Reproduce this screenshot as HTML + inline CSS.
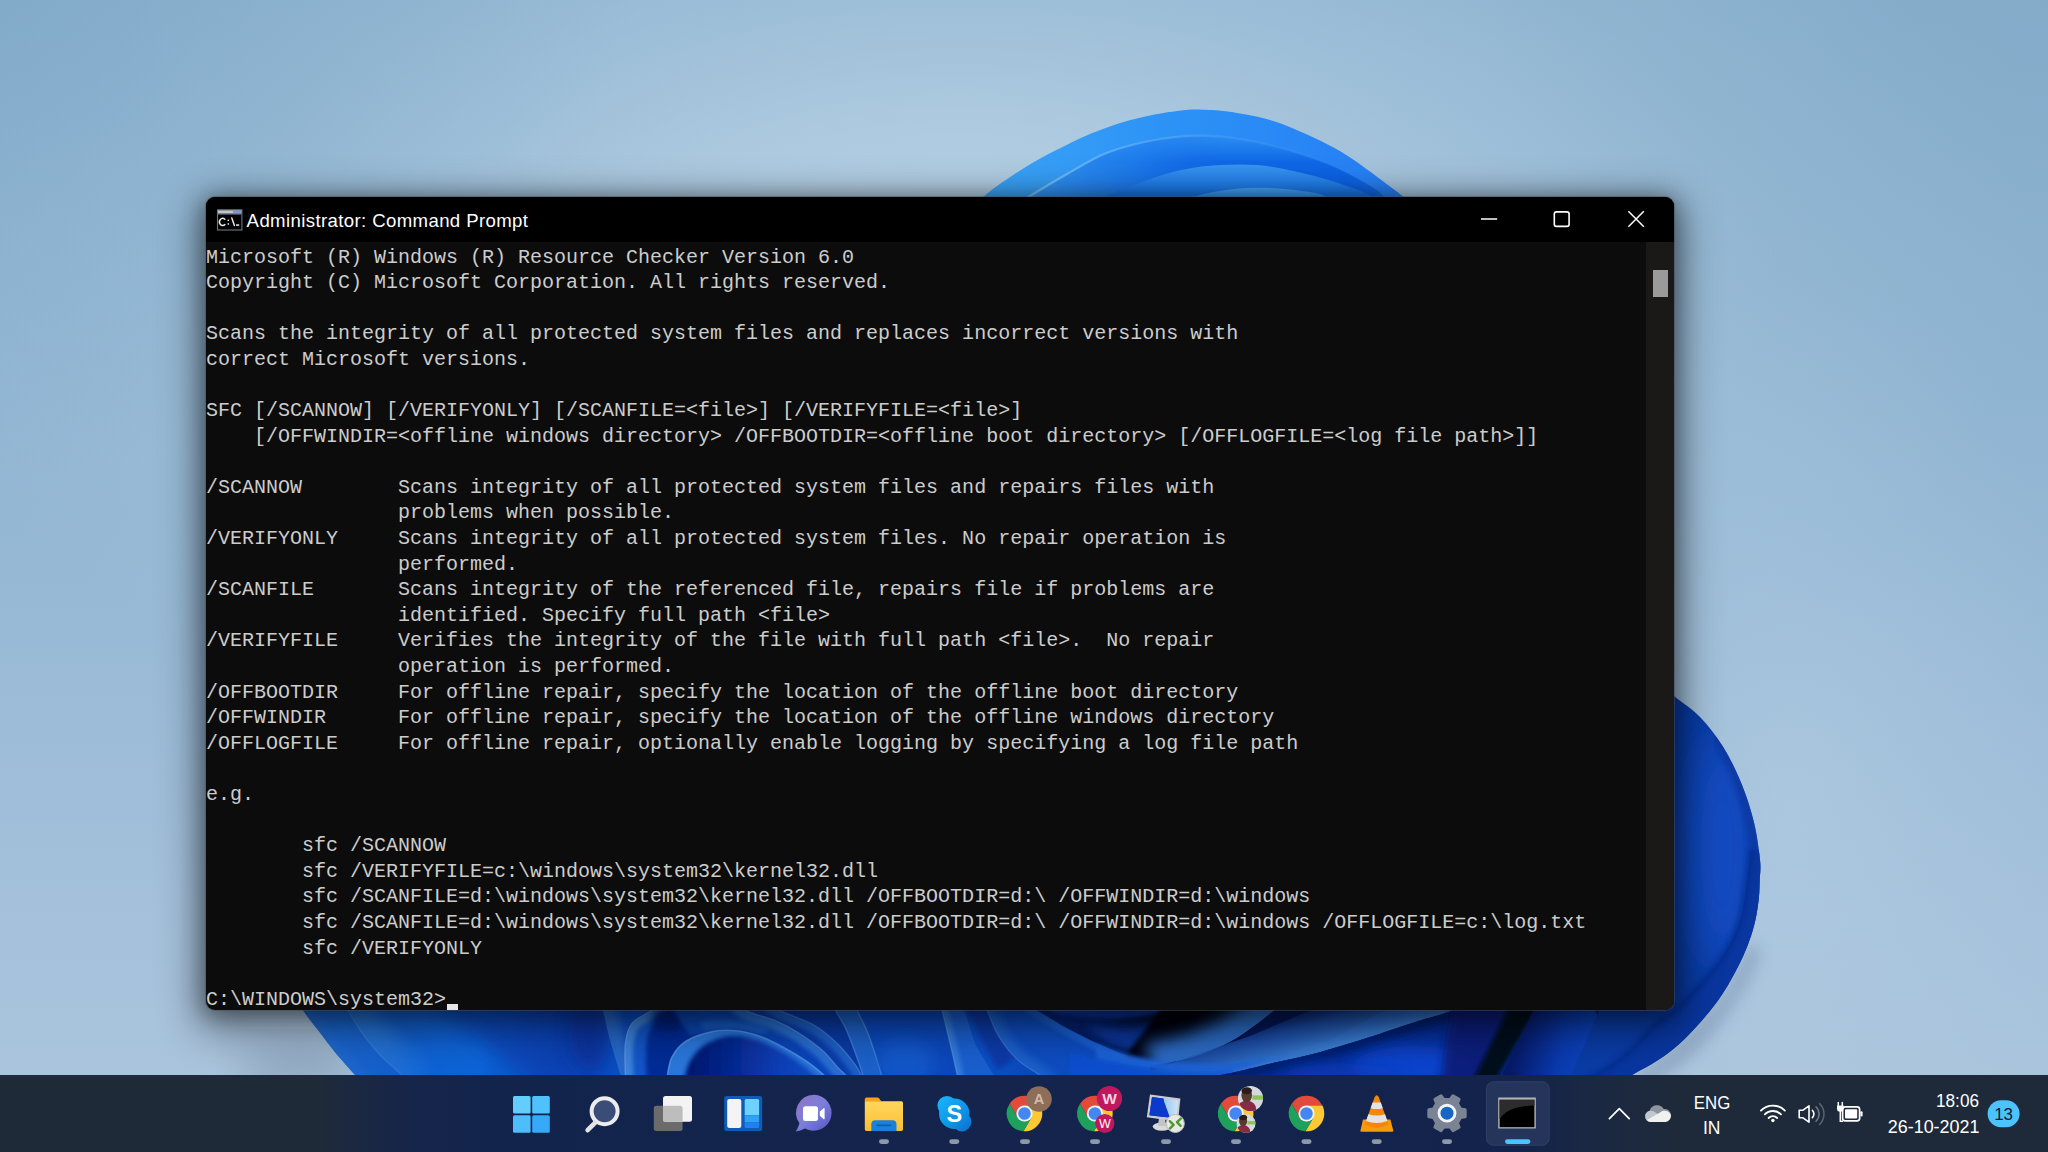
<!DOCTYPE html>
<html>
<head>
<meta charset="utf-8">
<title>Administrator: Command Prompt</title>
<style>
*{margin:0;padding:0;box-sizing:border-box}
html,body{width:2048px;height:1152px;overflow:hidden;background:#9dbbd6;font-family:"Liberation Sans",sans-serif}
#wall{position:absolute;left:0;top:0;width:2048px;height:1152px}
#win{position:absolute;left:206px;top:197px;width:1468px;height:813px;background:#0c0c0c;border-radius:9px;overflow:hidden;
 box-shadow:0 0 0 1px rgba(70,80,95,.5),0 12px 42px 8px rgba(0,0,0,.42),0 3px 22px 3px rgba(0,0,0,.34)}
#tb{position:absolute;left:0;top:0;width:100%;height:45px;background:#000}
#tb .ico{position:absolute;left:11px;top:12px;width:26px;height:21px}
#tb .ttl{position:absolute;left:40.6px;top:12px;font-size:18.6px;line-height:24px;color:#fff;white-space:pre;letter-spacing:0.38px}
#tb svg.ctl{position:absolute;top:0;left:0}
#con{position:absolute;left:0;top:45px;width:1440px;height:768px;overflow:hidden}
#con pre{position:absolute;left:0;top:2.5px;font-family:"Liberation Mono",monospace;font-size:20px;line-height:25.6px;color:#cccccc;white-space:pre}
#cur{position:absolute;left:240.5px;top:761.8px;width:11.5px;height:5.8px;background:#e6e6e6}
#sb{position:absolute;left:1440px;top:45px;width:28px;height:768px;background:#1a1918}
#sb i{position:absolute;left:7px;top:28px;width:15px;height:27px;background:#9a9a9a}
#task{position:absolute;left:0;top:1075px;width:2048px;height:77px;overflow:hidden}
</style>
</head>
<body>
<svg id="wall" width="2048" height="1152" viewBox="0 0 2048 1152">
<defs>
<linearGradient id="bg0" x1="0" y1="0" x2="0" y2="1"><stop offset="0" stop-color="#89b0cd"/><stop offset=".45" stop-color="#94b7d4"/><stop offset=".8" stop-color="#a5c1db"/><stop offset="1" stop-color="#acc5dd"/></linearGradient>
</defs>
<rect width="2048" height="1152" fill="url(#bg0)"/>
<defs>
<filter id="b2" x="-5%" y="-5%" width="110%" height="110%"><feGaussianBlur stdDeviation="2"/></filter>
<filter id="b4" x="-5%" y="-5%" width="110%" height="110%"><feGaussianBlur stdDeviation="4"/></filter>
<filter id="b8" x="-10%" y="-10%" width="120%" height="120%"><feGaussianBlur stdDeviation="8"/></filter>
<filter id="sb2" filterUnits="userSpaceOnUse" x="200" y="960" width="1700" height="160"><feGaussianBlur stdDeviation="2"/></filter>
<filter id="sb4" filterUnits="userSpaceOnUse" x="200" y="960" width="1700" height="160"><feGaussianBlur stdDeviation="4"/></filter>
<filter id="sb8" filterUnits="userSpaceOnUse" x="200" y="960" width="1700" height="160"><feGaussianBlur stdDeviation="8"/></filter>
<filter id="rb8" filterUnits="userSpaceOnUse" x="1500" y="600" width="400" height="552"><feGaussianBlur stdDeviation="8"/></filter>
<filter id="b20" x="-20%" y="-20%" width="140%" height="140%"><feGaussianBlur stdDeviation="20"/></filter>
<filter id="b60" x="-30%" y="-30%" width="160%" height="160%"><feGaussianBlur stdDeviation="60"/></filter>
<linearGradient id="ta1" x1="983" y1="0" x2="1403" y2="0" gradientUnits="userSpaceOnUse"><stop offset="0" stop-color="#3ba4f6"/><stop offset=".45" stop-color="#2c92f6"/><stop offset="1" stop-color="#267df5"/></linearGradient>
<linearGradient id="ta2" x1="0" y1="134" x2="0" y2="197" gradientUnits="userSpaceOnUse"><stop offset="0" stop-color="#2f8ff3"/><stop offset=".45" stop-color="#0e68e6"/><stop offset="1" stop-color="#0a5be0"/></linearGradient>
<linearGradient id="ta2h" x1="1020" y1="0" x2="1390" y2="0" gradientUnits="userSpaceOnUse"><stop offset="0" stop-color="#7cc6fa" stop-opacity=".95"/><stop offset=".55" stop-color="#4aa0f4" stop-opacity=".5"/><stop offset="1" stop-color="#2a8af2" stop-opacity="0"/></linearGradient>
<linearGradient id="ta2l" x1="1020" y1="0" x2="1400" y2="0" gradientUnits="userSpaceOnUse"><stop offset="0" stop-color="#3a9ef4" stop-opacity=".95"/><stop offset=".3" stop-color="#2a8af0" stop-opacity=".55"/><stop offset=".55" stop-color="#1a70e8" stop-opacity="0"/><stop offset=".85" stop-color="#1a70e8" stop-opacity="0"/><stop offset="1" stop-color="#2a80f0" stop-opacity=".5"/></linearGradient>
<linearGradient id="ta3" x1="0" y1="164" x2="0" y2="200" gradientUnits="userSpaceOnUse"><stop offset="0" stop-color="#3a96f0"/><stop offset="1" stop-color="#0f6ce6"/></linearGradient>
<linearGradient id="ta4" x1="0" y1="187" x2="0" y2="200" gradientUnits="userSpaceOnUse"><stop offset="0" stop-color="#49a4f4"/><stop offset="1" stop-color="#2b8cee"/></linearGradient>
<radialGradient id="rb1" cx="1728" cy="850" r="150" gradientUnits="userSpaceOnUse"><stop offset="0" stop-color="#1453cc"/><stop offset=".5" stop-color="#0d47bc"/><stop offset="1" stop-color="#0a3aa4"/></radialGradient>
<linearGradient id="bs0" x1="300" y1="0" x2="1760" y2="0" gradientUnits="userSpaceOnUse">
<stop offset="0" stop-color="#1b68cf"/><stop offset=".068" stop-color="#155fcc"/><stop offset=".123" stop-color="#0e62d6"/><stop offset=".178" stop-color="#0a48ba"/><stop offset=".219" stop-color="#0c4fc4"/><stop offset=".274" stop-color="#0a3fb0"/><stop offset=".397" stop-color="#0a48c0"/><stop offset=".479" stop-color="#0c4ec4"/><stop offset=".548" stop-color="#0a3aa0"/><stop offset=".65" stop-color="#0a3cb0"/><stop offset=".767" stop-color="#0b44cc"/><stop offset=".84" stop-color="#0a3cac"/><stop offset="1" stop-color="#0a38a4"/></linearGradient>
<clipPath id="cTop"><rect x="900" y="60" width="600" height="160"/></clipPath>
</defs>
<radialGradient id="bgc" cx="0" cy="0" r="1" gradientUnits="userSpaceOnUse" gradientTransform="translate(960 270) scale(1080 540)"><stop offset="0" stop-color="#bad3e6" stop-opacity=".9"/><stop offset=".25" stop-color="#bad3e6" stop-opacity=".74"/><stop offset=".5" stop-color="#b9d2e6" stop-opacity=".44"/><stop offset=".75" stop-color="#b8d1e6" stop-opacity=".16"/><stop offset="1" stop-color="#b8d1e6" stop-opacity="0"/></radialGradient>
<radialGradient id="bgr" cx="0" cy="0" r="1" gradientUnits="userSpaceOnUse" gradientTransform="translate(1790 800) scale(300 520)"><stop offset="0" stop-color="#b6cfe4" stop-opacity=".5"/><stop offset=".5" stop-color="#b6cfe4" stop-opacity=".22"/><stop offset="1" stop-color="#b6cfe4" stop-opacity="0"/></radialGradient>
<radialGradient id="bgtl" cx="0" cy="0" r="1" gradientUnits="userSpaceOnUse" gradientTransform="translate(-60 -40) scale(700 520)"><stop offset="0" stop-color="#7ca7c7" stop-opacity=".6"/><stop offset=".5" stop-color="#7ca7c7" stop-opacity=".25"/><stop offset="1" stop-color="#7ca7c7" stop-opacity="0"/></radialGradient>
<radialGradient id="bgtr" cx="0" cy="0" r="1" gradientUnits="userSpaceOnUse" gradientTransform="translate(2110 -40) scale(640 560)"><stop offset="0" stop-color="#7ea8c6" stop-opacity=".55"/><stop offset=".5" stop-color="#7ea8c6" stop-opacity=".22"/><stop offset="1" stop-color="#7ea8c6" stop-opacity="0"/></radialGradient>
<rect width="2048" height="1152" fill="url(#bgc)"/>
<rect width="2048" height="1152" fill="url(#bgr)"/>
<rect width="2048" height="1152" fill="url(#bgtl)"/>
<rect width="2048" height="1152" fill="url(#bgtr)"/>
<ellipse cx="300" cy="1066" rx="60" ry="26" fill="#5d6f86" opacity=".32" filter="url(#b20)"/>
<g clip-path="url(#cTop)">
<path d="M944.0 230.0C950.5 224.5 973.3 204.9 983.2 196.8C993.1 188.7 995.9 186.9 1003.5 181.6C1011.1 176.3 1020.4 170.1 1028.9 165.0C1037.4 159.9 1045.8 155.5 1054.3 151.1C1062.8 146.7 1071.2 142.2 1079.7 138.4C1088.2 134.6 1096.5 131.2 1105.0 128.2C1113.5 125.1 1121.9 122.4 1130.4 120.1C1138.9 117.8 1147.3 115.9 1155.8 114.3C1164.3 112.7 1174.8 111.3 1181.2 110.5C1187.6 109.7 1187.7 109.4 1194.0 109.4C1200.3 109.4 1210.8 109.7 1219.3 110.5C1227.8 111.3 1236.2 112.7 1244.7 114.3C1253.2 115.9 1261.6 117.6 1270.1 120.1C1278.6 122.6 1287.0 126.0 1295.5 129.5C1304.0 133.0 1312.4 136.8 1320.9 141.0C1329.4 145.2 1337.8 149.6 1346.3 154.9C1354.8 160.2 1364.1 167.2 1371.7 172.7C1379.3 178.2 1386.7 184.0 1392.0 188.0C1397.3 192.0 1395.4 190.1 1403.4 196.8C1411.4 203.5 1433.9 222.8 1440.0 228.0Z" fill="url(#ta1)"/>
<path d="M990.0 222.0C996.5 217.8 1016.1 204.8 1028.9 196.8C1041.7 188.8 1054.3 181.2 1067.0 174.0C1079.7 166.8 1092.3 158.9 1105.0 153.6C1117.7 148.3 1130.4 145.1 1143.1 142.2C1155.8 139.3 1168.5 137.4 1181.2 136.4C1193.9 135.4 1206.6 135.4 1219.3 136.4C1232.0 137.4 1244.7 139.5 1257.4 142.2C1270.1 144.9 1282.8 148.4 1295.5 152.4C1308.2 156.4 1320.9 160.6 1333.6 166.3C1346.3 172.0 1363.2 181.6 1371.7 186.7C1380.2 191.8 1378.0 190.9 1384.4 196.8C1390.8 202.7 1405.7 217.8 1410.0 222.0Z" fill="url(#ta2)"/>
<path d="M990.0 222.0C996.5 217.8 1016.1 204.8 1028.9 196.8C1041.7 188.8 1054.3 181.2 1067.0 174.0C1079.7 166.8 1092.3 158.9 1105.0 153.6C1117.7 148.3 1130.4 145.1 1143.1 142.2C1155.8 139.3 1168.5 137.4 1181.2 136.4C1193.9 135.4 1206.6 135.4 1219.3 136.4C1232.0 137.4 1244.7 139.5 1257.4 142.2C1270.1 144.9 1282.8 148.4 1295.5 152.4C1308.2 156.4 1320.9 160.6 1333.6 166.3C1346.3 172.0 1363.2 181.6 1371.7 186.7C1380.2 191.8 1378.0 190.9 1384.4 196.8C1390.8 202.7 1405.7 217.8 1410.0 222.0Z" fill="url(#ta2l)"/>
<path d="M990.0 222.0C996.5 217.8 1016.1 204.8 1028.9 196.8C1041.7 188.8 1054.3 181.2 1067.0 174.0C1079.7 166.8 1092.3 158.9 1105.0 153.6C1117.7 148.3 1130.4 145.1 1143.1 142.2C1155.8 139.3 1168.5 137.4 1181.2 136.4C1193.9 135.4 1206.6 135.4 1219.3 136.4C1232.0 137.4 1244.7 139.5 1257.4 142.2C1270.1 144.9 1282.8 148.4 1295.5 152.4C1308.2 156.4 1320.9 160.6 1333.6 166.3C1346.3 172.0 1363.2 181.6 1371.7 186.7C1380.2 191.8 1378.0 190.9 1384.4 196.8C1390.8 202.7 1405.7 217.8 1410.0 222.0" fill="none" stroke="url(#ta2h)" stroke-width="2.2"/>
<path d="M1060.0 222.0C1067.5 217.8 1091.2 203.5 1105.0 196.8C1118.8 190.1 1130.3 186.1 1143.0 181.6C1155.7 177.1 1168.5 172.8 1181.2 170.1C1193.9 167.3 1206.6 165.9 1219.3 165.1C1232.0 164.3 1244.7 164.0 1257.4 165.1C1270.1 166.2 1282.8 168.7 1295.5 171.4C1308.2 174.2 1320.9 177.4 1333.6 181.6C1346.3 185.8 1360.6 190.1 1371.7 196.8C1382.8 203.5 1395.3 217.8 1400.0 222.0Z" fill="url(#ta3)"/>
<path d="M1150.0 215.0C1157.3 212.0 1180.3 201.1 1194.0 196.8C1207.7 192.5 1219.3 190.7 1232.0 189.2C1244.7 187.7 1257.3 187.5 1270.0 187.9C1282.7 188.3 1298.7 190.2 1308.0 191.7C1317.3 193.2 1319.0 192.9 1326.0 196.8C1333.0 200.7 1346.0 212.0 1350.0 215.0Z" fill="url(#ta4)"/>
</g>
<clipPath id="cBot"><path d="M296.0 996.0C297.2 998.5 299.6 1005.1 303.4 1011.0C307.2 1016.9 313.8 1024.8 319.0 1031.6C324.2 1038.4 328.7 1044.7 334.7 1051.9C340.7 1059.1 351.1 1070.7 355.0 1075.0C358.9 1079.3 357.5 1077.5 358.0 1078.0L1628 1078L1640 996Z"/></clipPath>
<g clip-path="url(#cBot)">
<rect x="280" y="1000" width="1500" height="90" fill="url(#bs0)"/>
<clipPath id="se1"><path d="M296.0 996.0C297.2 998.5 299.6 1005.1 303.4 1011.0C307.2 1016.9 313.8 1024.8 319.0 1031.6C324.2 1038.4 328.7 1044.7 334.7 1051.9C340.7 1059.1 350.4 1069.7 355.0 1075.0C359.6 1080.3 360.8 1082.5 362.0 1084.0L420.0 1084.0L420.0 996.0Z"/></clipPath>
<g clip-path="url(#se1)"><path d="M296.0 996.0C297.2 998.5 299.6 1005.1 303.4 1011.0C307.2 1016.9 313.8 1024.8 319.0 1031.6C324.2 1038.4 328.7 1044.7 334.7 1051.9C340.7 1059.1 350.4 1069.7 355.0 1075.0C359.6 1080.3 360.8 1082.5 362.0 1084.0" fill="none" stroke="#2a6cc8" stroke-width="20" opacity="0.35" filter="url(#sb4)"/></g>
<clipPath id="se2"><path d="M338.0 996.0C339.8 998.7 344.4 1005.3 348.8 1012.0C353.2 1018.7 358.9 1028.9 364.4 1036.3C369.9 1043.7 375.4 1050.1 381.6 1056.6C387.9 1063.0 397.2 1070.4 401.9 1075.0C406.6 1079.6 408.6 1082.5 410.0 1084.0L560.0 1084.0L560.0 996.0Z"/></clipPath>
<g clip-path="url(#se2)"><path d="M338.0 996.0C339.8 998.7 344.4 1005.3 348.8 1012.0C353.2 1018.7 358.9 1028.9 364.4 1036.3C369.9 1043.7 375.4 1050.1 381.6 1056.6C387.9 1063.0 397.2 1070.4 401.9 1075.0C406.6 1079.6 408.6 1082.5 410.0 1084.0" fill="none" stroke="#2c78d6" stroke-width="48" opacity="0.7" filter="url(#sb8)"/></g>
<path d="M338.0 996.0C339.8 998.7 344.4 1005.3 348.8 1012.0C353.2 1018.7 358.9 1028.9 364.4 1036.3C369.9 1043.7 375.4 1050.1 381.6 1056.6C387.9 1063.0 397.2 1070.4 401.9 1075.0C406.6 1079.6 408.6 1082.5 410.0 1084.0" fill="none" stroke="#4a8fe0" stroke-width="1.6" opacity="0.4"/>
<ellipse cx="440" cy="1062" rx="50" ry="20" fill="#0868dc" opacity=".45" filter="url(#sb8)"/>
<path d="M436 1004L600 1004L600 1084L536 1084Z" fill="#0a3cb0" opacity=".55" filter="url(#sb8)"/>
<ellipse cx="590" cy="1030" rx="22" ry="40" fill="#072c90" opacity=".6" filter="url(#sb8)"/>
<clipPath id="se3"><path d="M600.0 1000.0C600.6 1002.0 601.7 1005.3 603.4 1012.0C605.1 1018.7 607.1 1029.5 610.0 1040.0C612.9 1050.5 618.4 1067.7 620.6 1075.0C622.8 1082.3 622.6 1082.5 623.0 1084.0L660.0 1084.0L660.0 1000.0Z"/></clipPath>
<g clip-path="url(#se3)"><path d="M600.0 1000.0C600.6 1002.0 601.7 1005.3 603.4 1012.0C605.1 1018.7 607.1 1029.5 610.0 1040.0C612.9 1050.5 618.4 1067.7 620.6 1075.0C622.8 1082.3 622.6 1082.5 623.0 1084.0" fill="none" stroke="#2e70cc" stroke-width="28" opacity="0.8" filter="url(#sb4)"/></g>
<path d="M664.0 1002.0C661.5 1003.7 654.2 1008.4 648.8 1012.0C643.4 1015.6 635.5 1018.5 631.6 1023.8C627.7 1029.1 626.3 1035.5 625.3 1044.0C624.2 1052.5 625.3 1068.3 625.3 1075.0C625.3 1081.7 625.5 1082.5 625.5 1084.0L700.0 1084.0L700.0 1002.0Z" fill="#1458c8" opacity="0.9"/>
<clipPath id="se4"><path d="M664.0 1002.0C661.5 1003.7 654.2 1008.4 648.8 1012.0C643.4 1015.6 635.5 1018.5 631.6 1023.8C627.7 1029.1 626.3 1035.5 625.3 1044.0C624.2 1052.5 625.3 1068.3 625.3 1075.0C625.3 1081.7 625.5 1082.5 625.5 1084.0L700.0 1084.0L700.0 1002.0Z"/></clipPath>
<g clip-path="url(#se4)"><path d="M664.0 1002.0C661.5 1003.7 654.2 1008.4 648.8 1012.0C643.4 1015.6 635.5 1018.5 631.6 1023.8C627.7 1029.1 626.3 1035.5 625.3 1044.0C624.2 1052.5 625.3 1068.3 625.3 1075.0C625.3 1081.7 625.5 1082.5 625.5 1084.0" fill="none" stroke="#4287dc" stroke-width="16" opacity="0.9" filter="url(#sb2)"/></g>
<path d="M664.0 1002.0C661.5 1003.7 654.2 1008.4 648.8 1012.0C643.4 1015.6 635.5 1018.5 631.6 1023.8C627.7 1029.1 626.3 1035.5 625.3 1044.0C624.2 1052.5 625.3 1068.3 625.3 1075.0C625.3 1081.7 625.5 1082.5 625.5 1084.0" fill="none" stroke="#6aa2e6" stroke-width="1.4" opacity="0.6"/>
<path d="M676.0 1002.0C673.7 1004.0 666.3 1009.3 662.0 1014.0C657.7 1018.7 652.7 1024.0 650.0 1030.0C647.3 1036.0 646.5 1041.0 646.0 1050.0C645.5 1059.0 646.8 1078.3 647.0 1084.0L700.0 1084.0L700.0 1002.0Z" fill="#062c94" opacity="0.95" filter="url(#sb2)"/>
<ellipse cx="668" cy="1018" rx="16" ry="14" fill="#041e74" opacity=".8" filter="url(#sb4)"/>
<path d="M668 1002L760 1002L800 1040L730 1028L690 1036Z" fill="#0c48b4" opacity=".9" filter="url(#sb2)"/>
<path d="M700 1022C720 1018 750 1020 770 1030L760 1034C740 1028 720 1028 704 1030Z" fill="#1e62cc" opacity=".7" filter="url(#sb2)"/>
<path d="M666.0 1086.0C666.2 1084.2 666.5 1079.9 667.5 1075.0C668.5 1070.1 669.1 1062.3 672.2 1056.6C675.3 1050.9 679.5 1045.2 686.3 1041.0C693.1 1036.8 704.5 1033.3 712.8 1031.6C721.1 1029.9 728.5 1030.0 736.3 1030.8C744.1 1031.6 751.9 1033.6 759.7 1036.3C767.5 1039.0 775.3 1043.0 783.1 1047.2C790.9 1051.4 799.8 1056.7 806.6 1061.3C813.4 1065.9 819.2 1070.9 823.8 1075.0C828.4 1079.1 832.3 1084.2 834.0 1086.0Z" fill="#2a76da"/>
<path d="M666.0 1086.0C666.2 1084.2 666.5 1079.9 667.5 1075.0C668.5 1070.1 669.1 1062.3 672.2 1056.6C675.3 1050.9 679.5 1045.2 686.3 1041.0C693.1 1036.8 704.5 1033.3 712.8 1031.6C721.1 1029.9 728.5 1030.0 736.3 1030.8C744.1 1031.6 751.9 1033.6 759.7 1036.3C767.5 1039.0 775.3 1043.0 783.1 1047.2C790.9 1051.4 799.8 1056.7 806.6 1061.3C813.4 1065.9 819.2 1070.9 823.8 1075.0C828.4 1079.1 832.3 1084.2 834.0 1086.0" fill="none" stroke="#5a9ae6" stroke-width="1.6" opacity=".75"/>
<linearGradient id="bai" x1="690" y1="0" x2="822" y2="0" gradientUnits="userSpaceOnUse"><stop offset="0" stop-color="#041870"/><stop offset=".35" stop-color="#062a94"/><stop offset=".7" stop-color="#0a40b8"/><stop offset="1" stop-color="#0c4cc6"/></linearGradient>
<path d="M684.0 1086.0C684.3 1083.7 684.7 1076.7 686.0 1072.0C687.3 1067.3 689.2 1062.3 692.0 1058.0C694.8 1053.7 698.3 1049.3 703.0 1046.0C707.7 1042.7 714.2 1039.7 720.0 1038.0C725.8 1036.3 731.3 1035.5 738.0 1036.0C744.7 1036.5 752.5 1038.3 760.0 1041.0C767.5 1043.7 775.8 1048.0 783.0 1052.0C790.2 1056.0 797.3 1060.8 803.0 1065.0C808.7 1069.2 813.5 1073.5 817.0 1077.0C820.5 1080.5 822.8 1084.5 824.0 1086.0Z" fill="url(#bai)" filter="url(#sb2)"/>
<path d="M736.0 1004.0C738.1 1005.3 742.2 1009.2 748.8 1012.0C755.3 1014.8 767.0 1017.1 775.3 1020.6C783.6 1024.1 791.0 1028.0 798.8 1033.0C806.6 1038.0 815.7 1044.5 822.2 1050.3C828.7 1056.0 833.9 1063.4 837.8 1067.5C841.7 1071.6 843.2 1071.9 845.6 1075.0C848.0 1078.1 850.9 1084.2 852.0 1086.0L900.0 1086.0L900.0 1004.0Z" fill="#0b3ca8" opacity="0.9"/>
<clipPath id="se5"><path d="M736.0 1004.0C738.1 1005.3 742.2 1009.2 748.8 1012.0C755.3 1014.8 767.0 1017.1 775.3 1020.6C783.6 1024.1 791.0 1028.0 798.8 1033.0C806.6 1038.0 815.7 1044.5 822.2 1050.3C828.7 1056.0 833.9 1063.4 837.8 1067.5C841.7 1071.6 843.2 1071.9 845.6 1075.0C848.0 1078.1 850.9 1084.2 852.0 1086.0L700.0 1086.0L700.0 1004.0Z"/></clipPath>
<g clip-path="url(#se5)"><path d="M736.0 1004.0C738.1 1005.3 742.2 1009.2 748.8 1012.0C755.3 1014.8 767.0 1017.1 775.3 1020.6C783.6 1024.1 791.0 1028.0 798.8 1033.0C806.6 1038.0 815.7 1044.5 822.2 1050.3C828.7 1056.0 833.9 1063.4 837.8 1067.5C841.7 1071.6 843.2 1071.9 845.6 1075.0C848.0 1078.1 850.9 1084.2 852.0 1086.0" fill="none" stroke="#2e74d4" stroke-width="18" opacity="0.85" filter="url(#sb2)"/></g>
<path d="M736.0 1004.0C738.1 1005.3 742.2 1009.2 748.8 1012.0C755.3 1014.8 767.0 1017.1 775.3 1020.6C783.6 1024.1 791.0 1028.0 798.8 1033.0C806.6 1038.0 815.7 1044.5 822.2 1050.3C828.7 1056.0 833.9 1063.4 837.8 1067.5C841.7 1071.6 843.2 1071.9 845.6 1075.0C848.0 1078.1 850.9 1084.2 852.0 1086.0" fill="none" stroke="#5a98e2" stroke-width="1.4" opacity="0.6"/>
<path d="M768.0 1004.0C770.5 1005.3 775.3 1008.5 783.0 1012.0C790.7 1015.5 805.3 1020.0 814.4 1025.3C823.5 1030.6 831.0 1037.5 837.8 1044.0C844.6 1050.5 851.1 1059.2 855.0 1064.4C858.9 1069.6 859.5 1071.4 861.3 1075.0C863.1 1078.6 865.2 1084.2 866.0 1086.0L900.0 1086.0L900.0 1004.0Z" fill="#0a3aa4" opacity="0.9"/>
<clipPath id="se6"><path d="M768.0 1004.0C770.5 1005.3 775.3 1008.5 783.0 1012.0C790.7 1015.5 805.3 1020.0 814.4 1025.3C823.5 1030.6 831.0 1037.5 837.8 1044.0C844.6 1050.5 851.1 1059.2 855.0 1064.4C858.9 1069.6 859.5 1071.4 861.3 1075.0C863.1 1078.6 865.2 1084.2 866.0 1086.0L740.0 1086.0L740.0 1004.0Z"/></clipPath>
<g clip-path="url(#se6)"><path d="M768.0 1004.0C770.5 1005.3 775.3 1008.5 783.0 1012.0C790.7 1015.5 805.3 1020.0 814.4 1025.3C823.5 1030.6 831.0 1037.5 837.8 1044.0C844.6 1050.5 851.1 1059.2 855.0 1064.4C858.9 1069.6 859.5 1071.4 861.3 1075.0C863.1 1078.6 865.2 1084.2 866.0 1086.0" fill="none" stroke="#2468cc" stroke-width="16" opacity="0.8" filter="url(#sb2)"/></g>
<path d="M768.0 1004.0C770.5 1005.3 775.3 1008.5 783.0 1012.0C790.7 1015.5 805.3 1020.0 814.4 1025.3C823.5 1030.6 831.0 1037.5 837.8 1044.0C844.6 1050.5 851.1 1059.2 855.0 1064.4C858.9 1069.6 859.5 1071.4 861.3 1075.0C863.1 1078.6 865.2 1084.2 866.0 1086.0" fill="none" stroke="#4f8ede" stroke-width="1.4" opacity="0.55"/>
<path d="M832.0 1002.0C832.7 1003.7 834.0 1007.6 836.3 1012.0C838.6 1016.4 842.5 1021.8 845.6 1028.4C848.7 1035.1 852.1 1044.1 855.0 1051.9C857.9 1059.7 861.1 1069.3 862.8 1075.0C864.5 1080.7 864.6 1084.2 865.0 1086.0L900.0 1086.0L900.0 1002.0Z" fill="#1f66cc" opacity="0.9"/>
<path d="M832.0 1002.0C832.7 1003.7 834.0 1007.6 836.3 1012.0C838.6 1016.4 842.5 1021.8 845.6 1028.4C848.7 1035.1 852.1 1044.1 855.0 1051.9C857.9 1059.7 861.1 1069.3 862.8 1075.0C864.5 1080.7 864.6 1084.2 865.0 1086.0" fill="none" stroke="#5a98e2" stroke-width="1.4" opacity=".55"/>
<path d="M855.0 1002.0C855.5 1003.7 855.7 1006.3 858.0 1012.0C860.3 1017.7 865.1 1025.5 869.0 1036.0C872.9 1046.5 879.1 1066.7 881.6 1075.0C884.1 1083.3 883.6 1084.2 884.0 1086.0L960.0 1086.0L960.0 1002.0Z" fill="#0c48bc" opacity="1"/>
<path d="M855.0 1002.0C855.5 1003.7 855.7 1006.3 858.0 1012.0C860.3 1017.7 865.1 1025.5 869.0 1036.0C872.9 1046.5 879.1 1066.7 881.6 1075.0C884.1 1083.3 883.6 1084.2 884.0 1086.0" fill="none" stroke="#5a98e2" stroke-width="1.4" opacity=".6"/>
<ellipse cx="905" cy="1062" rx="30" ry="22" fill="#1660d2" opacity=".6" filter="url(#sb8)"/>
<path d="M940.0 1002.0C940.4 1003.7 940.8 1005.0 942.5 1012.0C944.2 1019.0 947.8 1033.5 950.3 1044.0C952.8 1054.5 955.8 1068.0 957.3 1075.0C958.8 1082.0 958.7 1084.2 959.0 1086.0L1000.0 1086.0L975.0 1044.0L962.0 1002.0Z" fill="#1c62d0" opacity="0.9"/>
<clipPath id="se7"><path d="M940.0 1002.0C940.4 1003.7 940.8 1005.0 942.5 1012.0C944.2 1019.0 947.8 1033.5 950.3 1044.0C952.8 1054.5 955.8 1068.0 957.3 1075.0C958.8 1082.0 958.7 1084.2 959.0 1086.0L1000.0 1086.0L1000.0 1002.0Z"/></clipPath>
<g clip-path="url(#se7)"><path d="M940.0 1002.0C940.4 1003.7 940.8 1005.0 942.5 1012.0C944.2 1019.0 947.8 1033.5 950.3 1044.0C952.8 1054.5 955.8 1068.0 957.3 1075.0C958.8 1082.0 958.7 1084.2 959.0 1086.0" fill="none" stroke="#3a80dc" stroke-width="12" opacity="0.8" filter="url(#sb2)"/></g>
<path d="M940.0 1002.0C940.4 1003.7 940.8 1005.0 942.5 1012.0C944.2 1019.0 947.8 1033.5 950.3 1044.0C952.8 1054.5 955.8 1068.0 957.3 1075.0C958.8 1082.0 958.7 1084.2 959.0 1086.0" fill="none" stroke="#5a98e2" stroke-width="1.4" opacity="0.6"/>
<path d="M963 1002L986 1002L990 1012L1000 1036L1014 1058L998 1070L986 1048L972 1020Z" fill="#0a38a4" opacity=".9" filter="url(#sb2)"/>
<path d="M984.0 1002.0C984.6 1003.7 985.3 1006.3 987.8 1012.0C990.3 1017.7 993.8 1028.3 998.8 1036.3C1003.8 1044.2 1010.7 1053.2 1017.5 1059.7C1024.3 1066.2 1033.7 1070.6 1039.4 1075.0C1045.2 1079.4 1049.9 1084.2 1052.0 1086.0L1300.0 1086.0L1300.0 1002.0Z" fill="#0e4cc0" opacity="1"/>
<clipPath id="se8"><path d="M984.0 1002.0C984.6 1003.7 985.3 1006.3 987.8 1012.0C990.3 1017.7 993.8 1028.3 998.8 1036.3C1003.8 1044.2 1010.7 1053.2 1017.5 1059.7C1024.3 1066.2 1033.7 1070.6 1039.4 1075.0C1045.2 1079.4 1049.9 1084.2 1052.0 1086.0L1300.0 1086.0L1300.0 1002.0Z"/></clipPath>
<g clip-path="url(#se8)"><path d="M984.0 1002.0C984.6 1003.7 985.3 1006.3 987.8 1012.0C990.3 1017.7 993.8 1028.3 998.8 1036.3C1003.8 1044.2 1010.7 1053.2 1017.5 1059.7C1024.3 1066.2 1033.7 1070.6 1039.4 1075.0C1045.2 1079.4 1049.9 1084.2 1052.0 1086.0" fill="none" stroke="#2468cc" stroke-width="20" opacity="0.7" filter="url(#sb4)"/></g>
<path d="M984.0 1002.0C984.6 1003.7 985.3 1006.3 987.8 1012.0C990.3 1017.7 993.8 1028.3 998.8 1036.3C1003.8 1044.2 1010.7 1053.2 1017.5 1059.7C1024.3 1066.2 1033.7 1070.6 1039.4 1075.0C1045.2 1079.4 1049.9 1084.2 1052.0 1086.0" fill="none" stroke="#4a8ade" stroke-width="1.4" opacity="0.5"/>
<linearGradient id="drk" x1="1040" y1="0" x2="1200" y2="0" gradientUnits="userSpaceOnUse"><stop offset="0" stop-color="#07257a"/><stop offset=".45" stop-color="#051a5c"/><stop offset=".8" stop-color="#020716"/><stop offset="1" stop-color="#02050f"/></linearGradient>
<path d="M1024.0 1002.0C1026.6 1003.7 1032.2 1007.6 1039.4 1012.0C1046.7 1016.4 1057.6 1023.1 1067.5 1028.4C1077.4 1033.7 1088.4 1039.3 1098.8 1044.0C1109.2 1048.7 1119.6 1053.5 1130.0 1056.6C1140.4 1059.7 1149.6 1061.5 1161.3 1062.8C1173.0 1064.1 1183.5 1064.9 1200.0 1064.4C1216.5 1063.9 1250.0 1060.7 1260.0 1060.0L1330 1040L1400 1002Z" fill="url(#drk)"/>
<clipPath id="se9"><path d="M1024.0 1002.0C1026.6 1003.7 1032.2 1007.6 1039.4 1012.0C1046.7 1016.4 1057.6 1023.1 1067.5 1028.4C1077.4 1033.7 1088.4 1039.3 1098.8 1044.0C1109.2 1048.7 1119.6 1053.5 1130.0 1056.6C1140.4 1059.7 1149.6 1061.5 1161.3 1062.8C1173.0 1064.1 1183.5 1064.9 1200.0 1064.4C1216.5 1063.9 1250.0 1060.7 1260.0 1060.0L1260.0 1100.0L1024.0 1100.0Z"/></clipPath>
<g clip-path="url(#se9)"><path d="M1024.0 1002.0C1026.6 1003.7 1032.2 1007.6 1039.4 1012.0C1046.7 1016.4 1057.6 1023.1 1067.5 1028.4C1077.4 1033.7 1088.4 1039.3 1098.8 1044.0C1109.2 1048.7 1119.6 1053.5 1130.0 1056.6C1140.4 1059.7 1149.6 1061.5 1161.3 1062.8C1173.0 1064.1 1183.5 1064.9 1200.0 1064.4C1216.5 1063.9 1250.0 1060.7 1260.0 1060.0" fill="none" stroke="#1e64d2" stroke-width="14" opacity="0.8" filter="url(#sb2)"/></g>
<path d="M1052 1013C1090 1020 1130 1020 1168 1012L1160 1003L1048 1003Z" fill="#0a3cae" opacity=".8" filter="url(#sb2)"/>
<path d="M1085 1024C1110 1030 1135 1030 1158 1022L1136 1052C1118 1048 1098 1040 1085 1024Z" fill="#0b3caa" opacity=".8" filter="url(#sb4)"/>
<path d="M1166 1002L1200 1002L1198 1024L1150 1062L1124 1058Z" fill="#02050f" opacity=".95" filter="url(#sb2)"/>
<path d="M1284.0 1002.0C1282.0 1003.7 1276.8 1008.1 1272.0 1012.0C1267.2 1015.9 1261.7 1020.5 1255.0 1025.3C1248.3 1030.1 1240.2 1036.3 1231.6 1041.0C1223.0 1045.7 1212.0 1050.2 1203.4 1053.4C1194.8 1056.7 1188.9 1058.4 1180.0 1060.5C1171.1 1062.6 1155.0 1065.1 1150.0 1066.0L1150 1002Z" fill="#061a5c" opacity=".0"/>
<clipPath id="se10"><path d="M1284.0 1002.0C1282.0 1003.7 1276.8 1008.1 1272.0 1012.0C1267.2 1015.9 1261.7 1020.5 1255.0 1025.3C1248.3 1030.1 1240.2 1036.3 1231.6 1041.0C1223.0 1045.7 1212.0 1050.2 1203.4 1053.4C1194.8 1056.7 1188.9 1058.4 1180.0 1060.5C1171.1 1062.6 1155.0 1065.1 1150.0 1066.0L1040.0 1070.0L1040.0 1002.0Z"/></clipPath>
<g clip-path="url(#se10)"><path d="M1284.0 1002.0C1282.0 1003.7 1276.8 1008.1 1272.0 1012.0C1267.2 1015.9 1261.7 1020.5 1255.0 1025.3C1248.3 1030.1 1240.2 1036.3 1231.6 1041.0C1223.0 1045.7 1212.0 1050.2 1203.4 1053.4C1194.8 1056.7 1188.9 1058.4 1180.0 1060.5C1171.1 1062.6 1155.0 1065.1 1150.0 1066.0" fill="none" stroke="#2e70cc" stroke-width="48" opacity="0.95" filter="url(#sb8)"/></g>
<path d="M1284.0 1002.0C1282.0 1003.7 1276.8 1008.1 1272.0 1012.0C1267.2 1015.9 1261.7 1020.5 1255.0 1025.3C1248.3 1030.1 1240.2 1036.3 1231.6 1041.0C1223.0 1045.7 1212.0 1050.2 1203.4 1053.4C1194.8 1056.7 1188.9 1058.4 1180.0 1060.5C1171.1 1062.6 1155.0 1065.1 1150.0 1066.0" fill="none" stroke="#4a88d8" stroke-width="1.4" opacity="0.4"/>
<path d="M1284.0 1002.0C1282.0 1003.7 1276.8 1008.1 1272.0 1012.0C1267.2 1015.9 1261.7 1020.5 1255.0 1025.3C1248.3 1030.1 1240.2 1036.3 1231.6 1041.0C1223.0 1045.7 1212.0 1050.2 1203.4 1053.4C1194.8 1056.7 1188.9 1058.4 1180.0 1060.5C1171.1 1062.6 1155.0 1065.1 1150.0 1066.0L1150.0 1070.0L1230.0 1068.0L1330.0 1040.0L1400.0 1002.0Z" fill="#06185a" opacity="0.95"/>
<linearGradient id="wdg" x1="1352" y1="982" x2="1367.5" y2="1037.8" gradientUnits="userSpaceOnUse"><stop offset="0" stop-color="#0a2a7c" stop-opacity="0"/><stop offset=".5" stop-color="#2058b8" stop-opacity=".75"/><stop offset="1" stop-color="#3c7ed0"/></linearGradient>
<path d="M1470.0 1004.0C1466.5 1005.3 1458.1 1009.0 1448.8 1012.0C1439.5 1015.0 1428.0 1017.9 1414.4 1022.2C1400.9 1026.5 1383.1 1032.8 1367.5 1037.8C1351.9 1042.8 1336.2 1047.7 1320.6 1051.9C1305.0 1056.1 1289.4 1059.2 1273.8 1062.8C1258.2 1066.4 1240.9 1070.9 1226.9 1073.8C1212.9 1076.7 1196.2 1079.0 1190.0 1080.0L1150 1072L1180 1060L1250 1036L1330 1002Z" fill="url(#wdg)"/>
<path d="M1096 1044C1130 1058 1170 1064 1210 1064C1240 1063 1262 1060 1290 1054L1236 1071C1200 1076 1150 1074 1096 1060Z" fill="#1c62d6" opacity=".95" filter="url(#sb2)"/>
<path d="M1070 1052C1140 1072 1200 1076 1236 1071L1215 1086L1070 1086Z" fill="#0c50d2" opacity=".9" filter="url(#sb2)"/>
<path d="M1470.0 1004.0C1466.5 1005.3 1458.1 1009.0 1448.8 1012.0C1439.5 1015.0 1428.0 1017.9 1414.4 1022.2C1400.9 1026.5 1383.1 1032.8 1367.5 1037.8C1351.9 1042.8 1336.2 1047.7 1320.6 1051.9C1305.0 1056.1 1289.4 1059.2 1273.8 1062.8C1258.2 1066.4 1240.9 1070.9 1226.9 1073.8C1212.9 1076.7 1196.2 1079.0 1190.0 1080.0L1190.0 1090.0L1560.0 1090.0L1560.0 1004.0Z" fill="#08309a" opacity="1"/>
<clipPath id="se11"><path d="M1470.0 1004.0C1466.5 1005.3 1458.1 1009.0 1448.8 1012.0C1439.5 1015.0 1428.0 1017.9 1414.4 1022.2C1400.9 1026.5 1383.1 1032.8 1367.5 1037.8C1351.9 1042.8 1336.2 1047.7 1320.6 1051.9C1305.0 1056.1 1289.4 1059.2 1273.8 1062.8C1258.2 1066.4 1240.9 1070.9 1226.9 1073.8C1212.9 1076.7 1196.2 1079.0 1190.0 1080.0L1190.0 1090.0L1560.0 1090.0L1560.0 1004.0Z"/></clipPath>
<g clip-path="url(#se11)"><path d="M1470.0 1004.0C1466.5 1005.3 1458.1 1009.0 1448.8 1012.0C1439.5 1015.0 1428.0 1017.9 1414.4 1022.2C1400.9 1026.5 1383.1 1032.8 1367.5 1037.8C1351.9 1042.8 1336.2 1047.7 1320.6 1051.9C1305.0 1056.1 1289.4 1059.2 1273.8 1062.8C1258.2 1066.4 1240.9 1070.9 1226.9 1073.8C1212.9 1076.7 1196.2 1079.0 1190.0 1080.0" fill="none" stroke="#041a68" stroke-width="18" opacity="0.85" filter="url(#sb4)"/></g>
<ellipse cx="1414" cy="1068" rx="62" ry="22" fill="#0c46d6" opacity=".85" filter="url(#sb8)"/>
<ellipse cx="1340" cy="1076" rx="60" ry="12" fill="#0a3cc0" opacity=".7" filter="url(#sb8)"/>
<path d="M1452 1002L1515 1002L1478 1086L1440 1086Z" fill="#071f78" opacity=".9" filter="url(#sb4)"/>
<path d="M1511.6 1002L1537 1002L1535 1012L1499 1075L1494 1086L1470 1086L1475.600 1075Z" fill="#040818" opacity=".95" filter="url(#sb2)"/>
<linearGradient id="lobM" x1="1520" y1="1030" x2="1600" y2="1050" gradientUnits="userSpaceOnUse"><stop offset="0" stop-color="#061a68"/><stop offset=".55" stop-color="#0a3aae"/><stop offset="1" stop-color="#0c46c2"/></linearGradient>
<path d="M1590.0 1002.0C1591.0 1003.7 1594.0 1007.6 1596.0 1012.0C1598.0 1016.4 1601.8 1022.3 1602.0 1028.4C1602.2 1034.5 1600.8 1041.0 1597.5 1048.8C1594.2 1056.6 1585.6 1068.8 1582.0 1075.0C1578.4 1081.2 1577.0 1084.2 1576.0 1086.0L1496 1086L1538 1002Z" fill="url(#lobM)"/>
<path d="M1590.0 1002.0C1591.0 1003.7 1594.0 1007.6 1596.0 1012.0C1598.0 1016.4 1601.8 1022.3 1602.0 1028.4C1602.2 1034.5 1600.8 1041.0 1597.5 1048.8C1594.2 1056.6 1585.6 1068.8 1582.0 1075.0C1578.4 1081.2 1577.0 1084.2 1576.0 1086.0L1700.0 1086.0L1700.0 1002.0Z" fill="#082c8e" opacity="1"/>
<clipPath id="se12"><path d="M1590.0 1002.0C1591.0 1003.7 1594.0 1007.6 1596.0 1012.0C1598.0 1016.4 1601.8 1022.3 1602.0 1028.4C1602.2 1034.5 1600.8 1041.0 1597.5 1048.8C1594.2 1056.6 1585.6 1068.8 1582.0 1075.0C1578.4 1081.2 1577.0 1084.2 1576.0 1086.0L1700.0 1086.0L1700.0 1002.0Z"/></clipPath>
<g clip-path="url(#se12)"><path d="M1590.0 1002.0C1591.0 1003.7 1594.0 1007.6 1596.0 1012.0C1598.0 1016.4 1601.8 1022.3 1602.0 1028.4C1602.2 1034.5 1600.8 1041.0 1597.5 1048.8C1594.2 1056.6 1585.6 1068.8 1582.0 1075.0C1578.4 1081.2 1577.0 1084.2 1576.0 1086.0" fill="none" stroke="#051a66" stroke-width="18" opacity="0.9" filter="url(#sb4)"/></g>
</g>
<path d="M1749.3 940.8C1747.8 944.3 1744.1 954.4 1740.6 961.6C1737.1 968.8 1732.8 977.0 1728.5 984.2C1724.2 991.4 1719.8 998.1 1714.6 1005.0C1709.4 1011.9 1703.3 1019.1 1697.2 1025.8C1691.1 1032.5 1684.8 1039.2 1678.1 1045.0C1671.4 1050.8 1664.8 1055.7 1657.3 1060.6C1649.8 1065.5 1637.0 1072.1 1633.0 1074.4" transform="translate(5,7)" fill="none" stroke="#6d84a4" stroke-width="14" opacity=".5" filter="url(#rb8)"/>
<path d="M1640.0 668.0C1645.7 672.7 1664.0 687.8 1674.0 696.0C1684.0 704.2 1691.8 708.4 1700.0 717.0C1708.2 725.6 1716.5 736.2 1723.5 747.5C1730.5 758.8 1736.9 772.5 1742.0 785.0C1747.1 797.5 1751.0 810.0 1754.0 822.5C1757.0 835.0 1759.0 850.4 1760.0 860.0C1761.0 869.6 1759.9 873.8 1759.7 880.0C1759.5 886.2 1759.6 890.7 1758.9 897.4C1758.2 904.1 1757.0 912.8 1755.4 920.0C1753.8 927.2 1751.8 933.9 1749.3 940.8C1746.8 947.7 1744.1 954.4 1740.6 961.6C1737.1 968.8 1732.8 977.0 1728.5 984.2C1724.2 991.4 1719.8 998.1 1714.6 1005.0C1709.4 1011.9 1703.3 1019.1 1697.2 1025.8C1691.1 1032.5 1684.8 1039.2 1678.1 1045.0C1671.4 1050.8 1664.8 1055.7 1657.3 1060.6C1649.8 1065.5 1640.5 1070.2 1633.0 1074.4C1625.5 1078.6 1619.2 1082.1 1612.0 1086.0C1604.8 1089.9 1593.7 1096.0 1590.0 1098.0L1560 1100L1604 1000L1604 668Z" fill="#0a3ca6"/>
<clipPath id="cR"><path d="M1640.0 668.0C1645.7 672.7 1664.0 687.8 1674.0 696.0C1684.0 704.2 1691.8 708.4 1700.0 717.0C1708.2 725.6 1716.5 736.2 1723.5 747.5C1730.5 758.8 1736.9 772.5 1742.0 785.0C1747.1 797.5 1751.0 810.0 1754.0 822.5C1757.0 835.0 1759.0 850.4 1760.0 860.0C1761.0 869.6 1759.9 873.8 1759.7 880.0C1759.5 886.2 1759.6 890.7 1758.9 897.4C1758.2 904.1 1757.0 912.8 1755.4 920.0C1753.8 927.2 1751.8 933.9 1749.3 940.8C1746.8 947.7 1744.1 954.4 1740.6 961.6C1737.1 968.8 1732.8 977.0 1728.5 984.2C1724.2 991.4 1719.8 998.1 1714.6 1005.0C1709.4 1011.9 1703.3 1019.1 1697.2 1025.8C1691.1 1032.5 1684.8 1039.2 1678.1 1045.0C1671.4 1050.8 1664.8 1055.7 1657.3 1060.6C1649.8 1065.5 1640.5 1070.2 1633.0 1074.4C1625.5 1078.6 1619.2 1082.1 1612.0 1086.0C1604.8 1089.9 1593.7 1096.0 1590.0 1098.0L1560 1100L1604 1000L1604 668Z"/></clipPath>
<g clip-path="url(#cR)">
<ellipse cx="1722" cy="850" rx="34" ry="120" fill="#154fc8" opacity=".85" filter="url(#b20)"/>
<path d="M1716.0 736.0C1719.5 743.3 1731.3 765.3 1737.0 780.0C1742.7 794.7 1747.0 810.3 1750.0 824.0C1753.0 837.7 1754.3 851.0 1755.0 862.0C1755.7 873.0 1754.2 885.3 1754.0 890.0" fill="none" stroke="#083294" stroke-width="9" opacity=".55" filter="url(#b2)"/>
<path d="M1751.0 850.0C1750.1 856.7 1747.8 878.2 1745.8 890.4C1743.8 902.6 1743.0 912.1 1738.9 923.4C1734.9 934.7 1728.5 947.4 1721.5 958.1C1714.5 968.8 1704.7 979.2 1697.2 987.6C1689.7 996.0 1683.4 1002.3 1676.4 1008.5C1669.4 1014.7 1662.4 1018.2 1655.0 1025.0C1647.6 1031.8 1639.8 1041.9 1632.0 1049.0C1624.2 1056.1 1614.0 1063.2 1608.0 1067.5C1602.0 1071.8 1600.7 1071.9 1596.0 1075.0C1591.3 1078.1 1582.7 1084.2 1580.0 1086.0L1800 1100L1800 850Z" fill="#09369e" opacity=".95"/>
<path d="M1751.0 850.0C1750.1 856.7 1747.8 878.2 1745.8 890.4C1743.8 902.6 1743.0 912.1 1738.9 923.4C1734.9 934.7 1728.5 947.4 1721.5 958.1C1714.5 968.8 1704.7 979.2 1697.2 987.6C1689.7 996.0 1683.4 1002.3 1676.4 1008.5C1669.4 1014.7 1662.4 1018.2 1655.0 1025.0C1647.6 1031.8 1639.8 1041.9 1632.0 1049.0C1624.2 1056.1 1614.0 1063.2 1608.0 1067.5C1602.0 1071.8 1600.7 1071.9 1596.0 1075.0C1591.3 1078.1 1582.7 1084.2 1580.0 1086.0" fill="none" stroke="#062a88" stroke-width="6" opacity=".55" filter="url(#b2)"/>
</g>
</svg>

<div id="win">
 <div id="tb">
  <svg class="ico" width="27" height="23" viewBox="216 208 27 23" style="position:absolute;left:10px;top:11px;width:27px;height:23px">
<rect x="217.5" y="209.8" width="24.400" height="20.200" fill="#000" stroke="#6c7787" stroke-width="1.100"/>
<rect x="218" y="210.300" width="23.400" height="3.400" fill="#c2c6cd"/>
<rect x="233" y="210.600" width="7.800" height="2.200" fill="#6d93cf"/>
<rect x="218" y="213.700" width="23.400" height="1" fill="#5a6575"/>
<g fill="none" stroke="#e9e9e9" stroke-width="1.500" stroke-linecap="round">
<path d="M224.800 219.200A3.200 3.600 0 1 0 224.800 224.600"/>
<path d="M231.800 218L234.400 225.400"/>
</g>
<rect x="227.600" y="219.600" width="1.500" height="1.500" fill="#e9e9e9"/><rect x="227.600" y="223.200" width="1.500" height="1.500" fill="#e9e9e9"/>
<rect x="236" y="224.300" width="3.200" height="1.500" fill="#e9e9e9"/>
</svg>

  <div class="ttl">Administrator: Command Prompt</div>
  <svg class="ctl" width="1468" height="45" viewBox="0 0 1468 45">
<path d="M1275 22.100H1291.200" stroke="#fff" stroke-width="1.500"/>
<rect x="1348.300" y="14.900" width="14.800" height="14.500" rx="2.200" fill="none" stroke="#fff" stroke-width="1.600"/>
<path d="M1422.400 14.200L1437.800 29.800M1437.800 14.200L1422.400 29.800" stroke="#fff" stroke-width="1.500"/>
</svg>

 </div>
 <div id="con"><pre>Microsoft (R) Windows (R) Resource Checker Version 6.0
Copyright (C) Microsoft Corporation. All rights reserved.

Scans the integrity of all protected system files and replaces incorrect versions with
correct Microsoft versions.

SFC [/SCANNOW] [/VERIFYONLY] [/SCANFILE=&lt;file&gt;] [/VERIFYFILE=&lt;file&gt;]
    [/OFFWINDIR=&lt;offline windows directory&gt; /OFFBOOTDIR=&lt;offline boot directory&gt; [/OFFLOGFILE=&lt;log file path&gt;]]

/SCANNOW        Scans integrity of all protected system files and repairs files with
                problems when possible.
/VERIFYONLY     Scans integrity of all protected system files. No repair operation is
                performed.
/SCANFILE       Scans integrity of the referenced file, repairs file if problems are
                identified. Specify full path &lt;file&gt;
/VERIFYFILE     Verifies the integrity of the file with full path &lt;file&gt;.  No repair
                operation is performed.
/OFFBOOTDIR     For offline repair, specify the location of the offline boot directory
/OFFWINDIR      For offline repair, specify the location of the offline windows directory
/OFFLOGFILE     For offline repair, optionally enable logging by specifying a log file path

e.g.

        sfc /SCANNOW
        sfc /VERIFYFILE=c:\windows\system32\kernel32.dll
        sfc /SCANFILE=d:\windows\system32\kernel32.dll /OFFBOOTDIR=d:\ /OFFWINDIR=d:\windows
        sfc /SCANFILE=d:\windows\system32\kernel32.dll /OFFBOOTDIR=d:\ /OFFWINDIR=d:\windows /OFFLOGFILE=c:\log.txt
        sfc /VERIFYONLY

C:\WINDOWS\system32&gt;</pre><div id="cur"></div></div>
 <div id="sb"><i></i></div>
</div>

<div id="task">
<svg width="2048" height="77" viewBox="0 1075 2048 77" style="position:absolute;left:0;top:0;font-family:'Liberation Sans',sans-serif">
<defs>
<linearGradient id="tbg" x1="0" y1="0" x2="2048" y2="0" gradientUnits="userSpaceOnUse">
<stop offset="0" stop-color="#1f2a38"/><stop offset=".155" stop-color="#1f2a39"/><stop offset=".2" stop-color="#16254a"/><stop offset=".235" stop-color="#13244c"/><stop offset=".5" stop-color="#14244c"/><stop offset=".74" stop-color="#13234b"/><stop offset=".775" stop-color="#1a2843"/><stop offset=".82" stop-color="#1e2a3a"/><stop offset="1" stop-color="#1e2a3a"/></linearGradient>
<linearGradient id="st" x1="0" y1="0" x2="1" y2="1"><stop offset="0" stop-color="#6fd4ff"/><stop offset="1" stop-color="#2b9df6"/></linearGradient>
<linearGradient id="chat" x1="0" y1="0" x2="1" y2="1"><stop offset="0" stop-color="#9270c4"/><stop offset=".5" stop-color="#7b80da"/><stop offset="1" stop-color="#5552c4"/></linearGradient>
<linearGradient id="fold" x1="0" y1="0" x2="0" y2="1"><stop offset="0" stop-color="#ffd75e"/><stop offset="1" stop-color="#fdbd33"/></linearGradient>
<linearGradient id="sky" x1="938" y1="1096" x2="972" y2="1131" gradientUnits="userSpaceOnUse"><stop offset="0" stop-color="#1bb6fa"/><stop offset=".55" stop-color="#0f95e6"/><stop offset="1" stop-color="#0a6fd0"/></linearGradient>
<linearGradient id="mon" x1="0" y1="0" x2="1" y2="0"><stop offset="0" stop-color="#0a3acc"/><stop offset=".48" stop-color="#0b45d8"/><stop offset=".52" stop-color="#9ccaf0"/><stop offset="1" stop-color="#cfe4f6"/></linearGradient>
<linearGradient id="cmdg" x1="0" y1="0" x2="0" y2="1"><stop offset="0" stop-color="#3a3a3a"/><stop offset=".45" stop-color="#000"/></linearGradient>
<g id="chrome">
<path d="M-14.88 -9.77A17.8 17.8 0 0 1 15.9 -8L0 -8L-6.93 4Z" fill="#e24a3b"/>
<path d="M15.9 -8A17.8 17.8 0 0 1 -1.02 17.77L6.93 4L0 -8Z" fill="#fcc934"/>
<path d="M-1.02 17.77A17.8 17.8 0 0 1 -14.88 -9.77L-6.93 4L6.93 4Z" fill="#1fa15b"/>
<circle r="8.1" fill="#f3f6fb"/><circle r="6.3" fill="#4587f2"/>
</g>
</defs>
<rect x="0" y="1075" width="2048" height="77" fill="url(#tbg)"/>
<rect x="513" y="1096" width="17.6" height="17.6" rx="1.5" fill="#63cdfe"/>
<rect x="532.2" y="1096" width="17.6" height="17.6" rx="1.5" fill="#4fc1fd"/>
<rect x="513" y="1115.2" width="17.6" height="17.6" rx="1.5" fill="#4dbefc"/>
<rect x="532.2" y="1115.2" width="17.6" height="17.6" rx="1.5" fill="#36a9f8"/>
<circle cx="604.6" cy="1111.2" r="13" fill="#3a4d78" stroke="#ececec" stroke-width="4"/>
<path d="M595.2 1122.6L587.6 1130.2" stroke="#e4e4e4" stroke-width="4.6" stroke-linecap="round"/>
<rect x="653.8" y="1105.7" width="28.8" height="25.2" rx="2.5" fill="#6b6b6b"/>
<rect x="663" y="1096" width="29" height="25.7" rx="2.5" fill="#f3f3f3"/>
<path d="M663 1105.7H680.1A2.5 2.5 0 0 1 682.6 1108.2V1121.7H665.5A2.5 2.5 0 0 1 663 1119.2Z" fill="#bdbdbd"/>
<rect x="724.2" y="1096" width="38" height="35" rx="2.5" fill="#0f5cb8"/>
<rect x="727.2" y="1099" width="14.1" height="28.9" rx="2.2" fill="#f4f4f4"/>
<path d="M744.7 1100.5A1.5 1.5 0 0 1 746.2 1099H757.6A1.5 1.5 0 0 1 759.1 1100.5V1115.3H744.7Z" fill="#6ed1ff"/>
<rect x="744.7" y="1115.3" width="14.4" height="7.1" fill="#2fa2f6"/>
<path d="M744.7 1122.4H759.1V1126.4A1.5 1.5 0 0 1 757.6 1127.9H746.2A1.5 1.5 0 0 1 744.7 1126.4Z" fill="#2180f0"/>
<path d="M813.9 1094.8A18 18 0 1 1 805 1128.6C802 1130.2 798.5 1131.2 795.7 1131.4C797.6 1128.6 798.8 1126 799.4 1123.2A18 18 0 0 1 813.9 1094.8Z" fill="url(#chat)"/>
<rect x="803" y="1106.3" width="15" height="14.7" rx="2.5" fill="#fff"/>
<path d="M819.8 1111.6L823.4 1108.4Q824.6 1107.6 824.6 1109V1118.4Q824.6 1119.8 823.4 1119L819.8 1115.8Z" fill="#fff"/>
<path d="M864.8 1099.2A1.7 1.7 0 0 1 866.5 1097.5H877.2Q878.4 1097.5 879.2 1098.6L881.4 1101.6H864.8Z" fill="#f5a41c"/>
<path d="M864.8 1101.2H901.3A1.7 1.7 0 0 1 903 1102.9V1129.2A1.7 1.7 0 0 1 901.3 1130.9H866.5A1.7 1.7 0 0 1 864.8 1129.2Z" fill="url(#fold)"/>
<path d="M871.3 1130.9V1124.3A4 4 0 0 1 875.3 1120.3H892.5A4 4 0 0 1 896.5 1124.3V1130.9Z" fill="#1b80d8"/>
<rect x="876.4" y="1124.4" width="15" height="1.8" rx=".9" fill="#0f5fae"/>
<rect x="879.0" y="1139.2" width="10" height="4.8" rx="2.4" fill="#8d98aa"/>
<g fill="url(#sky)"><circle cx="954.3" cy="1113.7" r="15.2"/><circle cx="947" cy="1105.6" r="9.6"/><circle cx="961.8" cy="1121.8" r="9.6"/></g>
<circle cx="954.3" cy="1113.7" r="24" fill="none"/>
<text x="954.4" y="1122.3" font-size="23.5" font-weight="700" fill="#fff" text-anchor="middle">S</text>
<rect x="949.3" y="1139.2" width="10" height="4.8" rx="2.4" fill="#8d98aa"/>
<use href="#chrome" x="1024.5" y="1113.5"/>
<circle cx="1039" cy="1099" r="12.8" fill="#8e6e58"/>
<text x="1039" y="1104.4" font-size="14.5" font-weight="700" fill="#cfbbaa" text-anchor="middle">A</text>
<rect x="1020.0" y="1139.2" width="10" height="4.8" rx="2.4" fill="#8d98aa"/>
<use href="#chrome" x="1094.9" y="1113.5"/>
<circle cx="1109.5" cy="1098.5" r="12.6" fill="#c0185c"/>
<text x="1109.5" y="1104.3" font-size="15.5" font-weight="700" fill="#f6d3e0" text-anchor="middle">W</text>
<circle cx="1104.8" cy="1123.5" r="9.6" fill="#c0185c"/>
<text x="1104.8" y="1128" font-size="12.5" fill="#fff" text-anchor="middle">W</text>
<rect x="1090.0" y="1139.2" width="10" height="4.8" rx="2.4" fill="#8d98aa"/>
<ellipse cx="1161.9" cy="1126.6" rx="9.2" ry="4.2" fill="#d9d9d9"/>
<path d="M1159 1118L1165 1118L1166 1126L1158 1126Z" fill="#c4c4c4"/>
<path d="M1150 1094.6L1180.4 1098.6L1178 1121.4L1146.8 1117.2Z" fill="#c9ccd2"/>
<path d="M1152 1097L1178.2 1100.4L1176.2 1118.6L1149.4 1115.2Z" fill="url(#mon)"/>
<path d="M1152 1097L1163 1098.4L1170 1117.8L1149.4 1115.2Z" fill="#0a39cc"/>
<circle cx="1175.3" cy="1123.5" r="9" fill="#e9e9e6" stroke="#bdbdb8" stroke-width="1"/>
<path d="M1169.8 1121.2L1173.6 1124.8L1170 1128.400M1180.800 1118.600L1177 1122.200L1180.600 1125.800" fill="none" stroke="#4c9a2a" stroke-width="2.4" stroke-linecap="round" stroke-linejoin="round"/>
<rect x="1161.0" y="1139.2" width="10" height="4.8" rx="2.4" fill="#8d98aa"/>
<use href="#chrome" x="1235.7" y="1113.5"/>
<clipPath id="ph1"><circle cx="1250.5" cy="1098.5" r="12.6"/></clipPath>
<g clip-path="url(#ph1)">
<rect x="1237.9" y="1085.9" width="25.2" height="25.2" fill="#d3d9df"/>
<rect x="1252.39" y="1095.35" width="11.34" height="4.409999999999999" fill="#8fc25a"/>
<ellipse cx="1246.72" cy="1109.21" rx="9.45" ry="8.819999999999999" fill="#8a2a4a"/>
<ellipse cx="1246.72" cy="1095.35" rx="5.292" ry="6.930000000000001" fill="#5a3a2c"/>
<ellipse cx="1246.72" cy="1090.688" rx="5.292" ry="3.528" fill="#2a1c18"/>
</g>
<clipPath id="ph2"><circle cx="1246" cy="1123.5" r="9.6"/></clipPath>
<g clip-path="url(#ph2)">
<rect x="1236.4" y="1113.9" width="19.2" height="19.2" fill="#d3d9df"/>
<rect x="1247.44" y="1121.1" width="8.64" height="3.36" fill="#8fc25a"/>
<ellipse cx="1243.12" cy="1131.66" rx="7.199999999999999" ry="6.72" fill="#8a2a4a"/>
<ellipse cx="1243.12" cy="1121.1" rx="4.032" ry="5.28" fill="#5a3a2c"/>
<ellipse cx="1243.12" cy="1117.548" rx="4.032" ry="2.688" fill="#2a1c18"/>
</g>
<rect x="1231.0" y="1139.2" width="10" height="4.8" rx="2.4" fill="#8d98aa"/>
<use href="#chrome" x="1306.5" y="1113.5"/>
<rect x="1301.5" y="1139.2" width="10" height="4.8" rx="2.4" fill="#8d98aa"/>
<path d="M1363 1119.5L1390.4 1119.5L1393.200 1130.200Q1393.400 1131.700 1392 1131.700L1361.500 1131.700Q1360.200 1131.700 1360.500 1130.200Z" fill="#f79a0e"/>
<path d="M1374.600 1097.200Q1376.700 1093.200 1378.800 1097.200L1388.600 1124.400Q1376.700 1130.400 1364.800 1124.400Z" fill="#f4870a"/>
<path d="M1372.6 1102.6L1380.8 1102.6L1382.8 1108.2Q1376.700 1110 1370.600 1108.200Z" fill="#e3e3e3"/>
<path d="M1368.4 1114.2Q1376.700 1116.600 1385 1114.200L1387.400 1121Q1376.700 1125 1366 1121Z" fill="#e3e3e3"/>
<rect x="1371.7" y="1139.2" width="10" height="4.8" rx="2.4" fill="#8d98aa"/>
<path d="M1460.6 1109.0L1465.2 1109.7L1465.2 1116.7L1460.6 1117.4L1457.4 1122.9L1459.1 1127.2L1453.0 1130.7L1450.2 1127.0L1443.8 1127.0L1441.0 1130.7L1434.9 1127.2L1436.6 1122.9L1433.4 1117.4L1428.8 1116.7L1428.8 1109.7L1433.4 1109.0L1436.6 1103.5L1434.9 1099.2L1441.0 1095.7L1443.8 1099.4L1450.2 1099.4L1453.0 1095.7L1459.1 1099.2L1457.4 1103.5Z" fill="#7a8495" stroke="#7a8495" stroke-width="3" stroke-linejoin="round"/>
<circle cx="1447" cy="1113.2" r="9.4" fill="#f2f4f8"/><circle cx="1447" cy="1113.2" r="6.5" fill="#1766c2"/>
<rect x="1442.0" y="1139.2" width="10" height="4.8" rx="2.4" fill="#8d98aa"/>
<rect x="1486.400" y="1081.800" width="62.800" height="63.400" rx="7" fill="#24345a" stroke="#2f4068" stroke-width="1"/>
<rect x="1498.200" y="1097.500" width="37.600" height="31" fill="#b4b4b4"/>
<rect x="1499.600" y="1099.800" width="34.800" height="27.400" fill="#000"/>
<path d="M1499.600 1099.800H1534.400V1105.500Q1508 1106 1499.600 1119Z" fill="#2c2c2c"/>
<rect x="1505.0" y="1139.2" width="25.4" height="4.8" rx="2.4" fill="#4cc2ff"/>
<path d="M1609.4 1118.6L1619.300 1108.700L1629.200 1118.600" fill="none" stroke="#fff" stroke-width="1.7" stroke-linecap="round" stroke-linejoin="round"/>
<path d="M1650.6 1121.9A5.6 5.6 0 0 1 1649.6 1110.8A7.8 7.8 0 0 1 1663.8 1109A6.500 6.500 0 0 1 1665.400 1121.900Z" fill="#8f959f"/>
<path d="M1650.600 1121.900A5.600 5.600 0 0 1 1648 1111.500Q1650.500 1110 1653.500 1111.200L1666.500 1119.500Q1666 1121.900 1663.500 1121.900Z" fill="#c3c7cd"/>
<path d="M1650.600 1121.900Q1648.500 1121.700 1647 1120L1660.500 1112.300A6.400 6.400 0 0 1 1671 1115.600A6.400 6.400 0 0 1 1665.400 1121.900Z" fill="#f1f1f1"/>
<text x="1712" y="1108.900" font-size="18.2" fill="#fff" text-anchor="middle" textLength="36.500" lengthAdjust="spacingAndGlyphs">ENG</text>
<text x="1711.700" y="1134.200" font-size="18.200" fill="#fff" text-anchor="middle" textLength="17.500" lengthAdjust="spacingAndGlyphs">IN</text>
<g fill="none" stroke="#fff" stroke-width="1.800" stroke-linecap="round">
<path d="M1760.900 1110.600A16.800 16.800 0 0 1 1784.900 1110.600"/>
<path d="M1764.800 1114.400A11.300 11.300 0 0 1 1781 1114.400"/>
<path d="M1768.600 1118A6 6 0 0 1 1777.200 1118"/>
</g><circle cx="1772.900" cy="1120.500" r="1.700" fill="#fff"/>
<path d="M1799.200 1110.200H1803L1809 1105.800V1122.200L1803 1117.800H1799.200Z" fill="none" stroke="#fff" stroke-width="1.600" stroke-linejoin="round"/>
<path d="M1812.400 1110.400A5 5 0 0 1 1812.400 1117.600" fill="none" stroke="#fff" stroke-width="1.600" stroke-linecap="round"/>
<path d="M1816 1106.800A10 10 0 0 1 1816 1121.200" fill="none" stroke="#6f7885" stroke-width="1.500" stroke-linecap="round"/>
<path d="M1819.600 1103.600A14.600 14.600 0 0 1 1819.600 1124.400" fill="none" stroke="#596270" stroke-width="1.500" stroke-linecap="round"/>
<rect x="1842.600" y="1106.800" width="17" height="14" rx="2.600" fill="none" stroke="#fff" stroke-width="1.700"/>
<rect x="1845" y="1109.200" width="12.200" height="9.200" rx="1" fill="#fff"/>
<rect x="1860.400" y="1111.200" width="2.200" height="5.200" rx="1" fill="#fff"/>
<path d="M1838.300 1102.600V1105.400M1842.300 1102.600V1105.400" stroke="#fff" stroke-width="1.500" stroke-linecap="round"/>
<path d="M1837 1105.400H1843.600V1108.400A3.300 3.300 0 0 1 1837 1108.400Z" fill="#fff"/>
<path d="M1840.300 1111V1121.200H1843" fill="none" stroke="#fff" stroke-width="1.500"/>
<text x="1979" y="1107.300" font-size="18.200" fill="#fff" text-anchor="end" textLength="43" lengthAdjust="spacingAndGlyphs">18:06</text>
<text x="1979.400" y="1133" font-size="18.200" fill="#fff" text-anchor="end" textLength="91.600" lengthAdjust="spacingAndGlyphs">26-10-2021</text>
<rect x="1987.600" y="1100.200" width="32" height="27" rx="13.500" fill="#4cc2ff"/>
<text x="2003.600" y="1119.800" font-size="17" fill="#0b1a2a" text-anchor="middle">13</text>
</svg>
</div>
</body>
</html>
